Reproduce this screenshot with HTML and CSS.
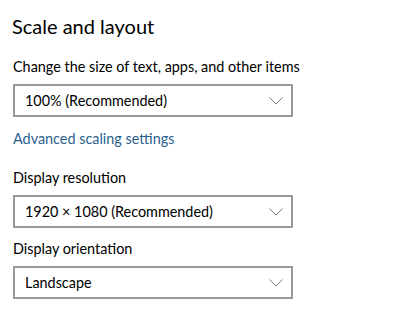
FILE: index.html
```html
<!DOCTYPE html>
<html>
<head>
  <meta charset="utf-8" />
  <title>Scale and layout</title>
  <link rel="stylesheet" href="styles.css">
</head>
<body>
  <section class="panel">
    <h2 class="title">Scale and layout</h2>

    <div class="field">
      <span class="label">Change the size of text, apps, and other items</span>
      <div class="combo">
        <span>100% (Recommended)</span>
        <svg class="chev" width="14" height="8" viewBox="0 0 14 8"><path d="M0.5 0.5 L7 7 L13.5 0.5" fill="none" stroke="#7a7a7a" stroke-width="1"/></svg>
      </div>
    </div>

    <a class="link" href="#">Advanced scaling settings</a>

    <div class="field">
      <span class="label">Display resolution</span>
      <div class="combo">
        <span>1920 × 1080 (Recommended)</span>
        <svg class="chev" width="14" height="8" viewBox="0 0 14 8"><path d="M0.5 0.5 L7 7 L13.5 0.5" fill="none" stroke="#7a7a7a" stroke-width="1"/></svg>
      </div>
    </div>

    <div class="field">
      <span class="label">Display orientation</span>
      <div class="combo">
        <span>Landscape</span>
        <svg class="chev" width="14" height="8" viewBox="0 0 14 8"><path d="M0.5 0.5 L7 7 L13.5 0.5" fill="none" stroke="#7a7a7a" stroke-width="1"/></svg>
      </div>
    </div>
  </section>
</body>
</html>
```

FILE: styles.css
```css
* {
  box-sizing: border-box;
}
body {
  margin: 0;
  background: #fff;
  color: #000;
  font: 14.4px/20px Lato, "Noto Sans", sans-serif;
}
a {
  text-decoration: none;
}

.panel {
  padding: 12px 0 0 13px;
  width: 293px;
}
.title {
  margin: 0 0 17px -1px;
  font-size: 20px;
  line-height: 28px;
  font-weight: 400;
}
.field {
  display: flex;
  flex-direction: column;
}
.label {
  margin-bottom: 7px;
  white-space: nowrap;
}
.combo {
  display: flex;
  align-items: center;
  justify-content: space-between;
  height: 33px;
  padding: 0 8px 0 10px;
  border: 2px solid #999;
}
.chev {
  display: block;
}
.link {
  display: block;
  margin: 12px 0 19px;
  color: #2b5f8e;
}
.field + .field {
  margin-top: 11px;
}
```
